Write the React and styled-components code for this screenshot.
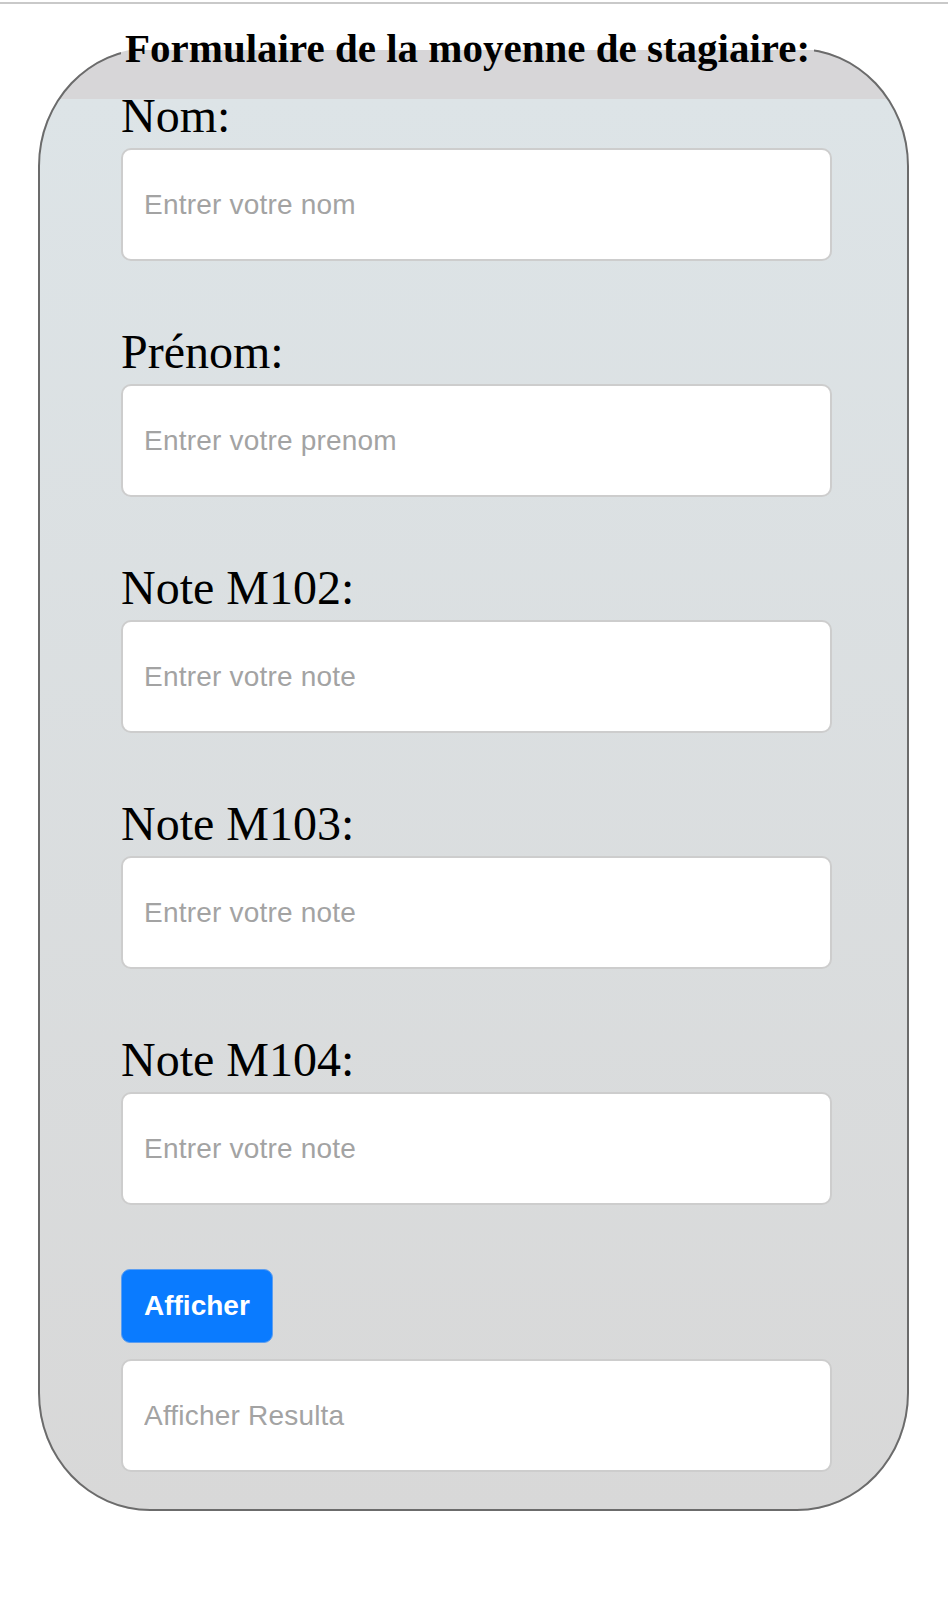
import React from 'react'
import styled, { createGlobalStyle } from 'styled-components'

const GlobalStyle = createGlobalStyle`
	html,
	body {
		margin: 0;
		background: #ffffff;
	}

	body {
		font-family: 'Liberation Serif', 'Times New Roman', serif;
		color: #000;
	}
`

const TopRule = styled.div`
	margin-top: 2px;
	height: 2px;
	background-color: #c9c9c9;
`

const Form = styled.fieldset`
	box-sizing: border-box;
	margin: 22px 39px 60px 38px;
	padding: 18px 75px 37px 81px;
	border: 2px solid #6b6b6b;
	border-radius: 112px / 118px;
	min-inline-size: 0;
	background: linear-gradient(
		to bottom,
		#d7d6d8 0,
		#d7d6d8 49px,
		#dde4e7 49px,
		#d8d8d8 100%
	);

	legend {
		padding: 0 4px;
		font-family: 'Liberation Serif', 'Times New Roman', serif;
		font-size: 41px;
		line-height: 45px;
		font-weight: bold;
	}
`

const Field = styled.div`
	display: flex;
	flex-direction: column;
	margin-bottom: 64px;

	label {
		display: block;
		margin-bottom: 6px;
		font-size: 48px;
		line-height: 53px;
	}
`

const TextInput = styled.input`
	box-sizing: border-box;
	width: 100%;
	height: 113px;
	padding: 0 21px;
	border: 2px solid #cdcdcd;
	border-radius: 10px;
	background-color: #ffffff;
	font-family: 'Liberation Sans', Arial, sans-serif;
	font-size: 28px;
	letter-spacing: 0.2px;
	color: #222;
	outline: none;

	&::placeholder {
		color: #a3a3a3;
		opacity: 1;
	}
`

const ShowButton = styled.button`
	display: block;
	box-sizing: border-box;
	height: 74px;
	padding: 0 22px;
	margin-bottom: 16px;
	border: 1px solid #5d9ef0;
	border-radius: 9px;
	background-color: #0a7bff;
	color: #ffffff;
	font-family: 'Liberation Sans', Arial, sans-serif;
	font-size: 28px;
	font-weight: bold;
	cursor: pointer;
`

const fields = [
	{ id: 'nom', label: 'Nom:', placeholder: 'Entrer votre nom' },
	{ id: 'prenom', label: 'Prénom:', placeholder: 'Entrer votre prenom' },
	{ id: 'm102', label: 'Note M102:', placeholder: 'Entrer votre note' },
	{ id: 'm103', label: 'Note M103:', placeholder: 'Entrer votre note' },
	{ id: 'm104', label: 'Note M104:', placeholder: 'Entrer votre note' },
]

const App = () => {
	return (
		<>
			<GlobalStyle />
			<TopRule />
			<Form>
				<legend>Formulaire de la moyenne de stagiaire:</legend>
				{fields.map((f) => (
					<Field key={f.id}>
						<label htmlFor={f.id}>{f.label}</label>
						<TextInput id={f.id} type='text' placeholder={f.placeholder} />
					</Field>
				))}
				<ShowButton type='button'>Afficher</ShowButton>
				<TextInput type='text' placeholder='Afficher Resulta' readOnly />
			</Form>
		</>
	)
}

export default App
